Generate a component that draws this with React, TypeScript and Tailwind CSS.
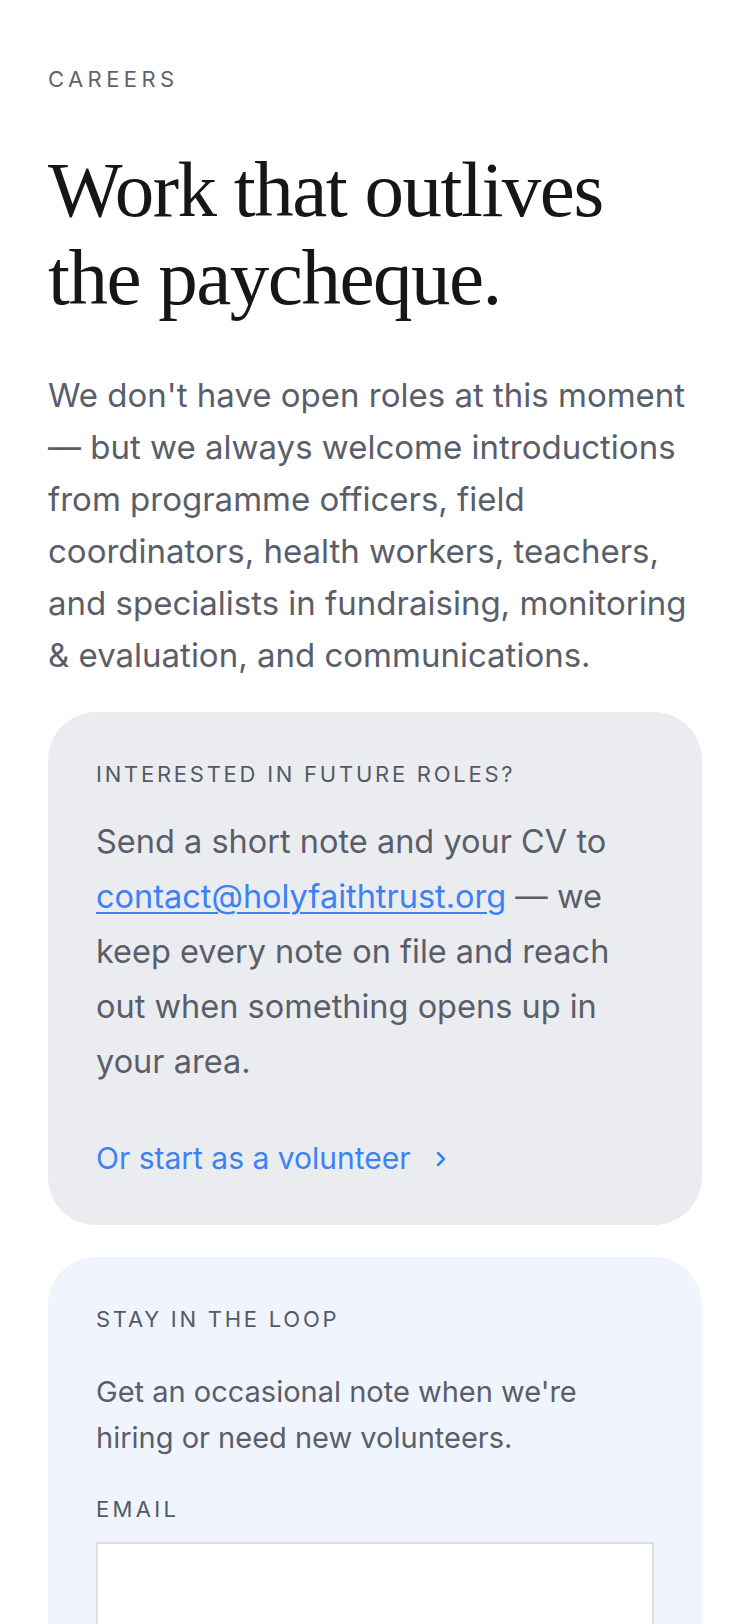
import { ChevronRight } from "lucide-react";

export default function App() {
  return (
    <div className="min-h-screen bg-white font-['Inter',sans-serif] text-[#4b5563]">
      <main className="px-12 pt-[63px]">
        {/* Intro */}
        <p className="text-[22px] leading-[33px] tracking-[0.2em] uppercase text-[#5f6370]">Careers</p>
        <h1 className="mt-[50px] max-w-[600px] font-['Liberation_Serif',serif] text-[79px] leading-[88px] tracking-[-1.5px] text-[#161616]">
          Work that outlives the paycheque.
        </h1>
        <p className="mt-[47px] text-[33px] leading-[52px] text-[#5a5e6a]">
          We don't have open roles at this moment — but we always welcome introductions from programme officers, field
          coordinators, health workers, teachers, and specialists in fundraising, monitoring &amp; evaluation, and
          communications.
        </p>

        {/* Future roles */}
        <section className="mt-[31px] rounded-[48px] bg-[#ebecf0] px-12 pt-[46px] pb-[44px]">
          <h2 className="text-[22px] leading-[33px] tracking-[0.125em] uppercase text-[#555966]">
            Interested in future roles?
          </h2>
          <p className="mt-[23px] text-[32.5px] leading-[55px] text-[#5a5e6a]">
            Send a short note and your CV to{" "}
            <a href="#" className="text-[#3b82f6] underline underline-offset-[4px] decoration-2">
              contact@holyfaithtrust.org
            </a>{" "}
            — we keep every note on file and reach out when something opens up in your area.
          </p>
          <a href="#" className="mt-[47px] flex items-center gap-[18px] text-[30px] leading-[45px] text-[#3b82f6]">
            Or start as a volunteer
            <ChevronRight className="w-[24px] h-[24px]" strokeWidth={2.5} />
          </a>
        </section>

        {/* Newsletter */}
        <section className="mt-8 rounded-t-[48px] bg-[#f0f5fd] px-12 pt-[46px] pb-12">
          <h2 className="text-[22px] leading-[33px] tracking-[0.125em] uppercase text-[#555966]">Stay in the loop</h2>
          <p className="mt-[33px] max-w-[540px] text-[29px] leading-[46px] text-[#5a5e6a]">
            Get an occasional note when we're hiring or need new volunteers.
          </p>
          <label className="mt-[32px] block text-[22px] leading-[33px] tracking-[0.15em] uppercase text-[#555966]">
            Email
            <input type="email" className="mt-[16px] block w-full h-[96px] border-2 border-[#dedfe2] bg-white" />
          </label>
        </section>
      </main>
    </div>
  );
}
